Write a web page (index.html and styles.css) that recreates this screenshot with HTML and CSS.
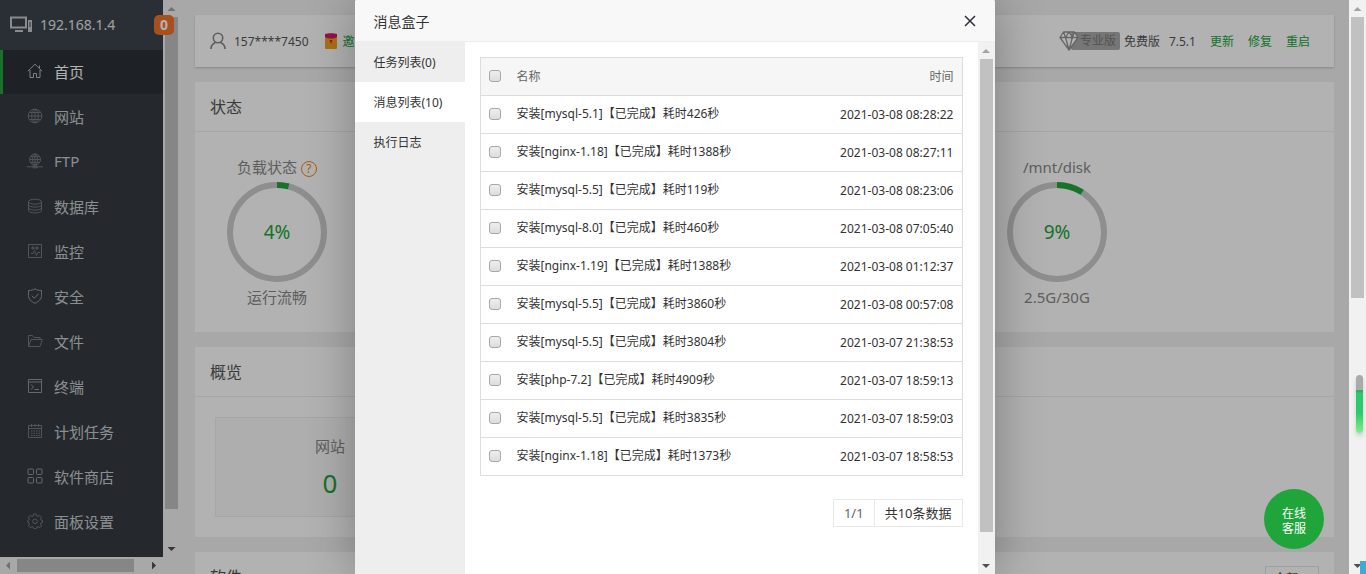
FILE: index.html
```html
<!DOCTYPE html>
<html lang="zh-CN">
<head>
  <meta charset="UTF-8" />
  <meta name="viewport" content="width=device-width, initial-scale=1.0" />
  <title>首页</title>
  <link rel="stylesheet" href="styles.css">
</head>
<body>
  <div class="app">
    <!-- Sidebar -->
    <aside class="sidebar">
      <nav class="menu">
        <div class="host">
          <svg class="host-icon" viewBox="0 0 23 16" width="23" height="16" fill="none" stroke="#c4c8cc" stroke-width="2"><path d="M1 1.5h15v10H1zM5 15h8"/><path d="M18 4h4v12h-4z" fill="#c4c8cc" stroke="none"/><path d="M20 6v5" stroke="#3c444d" stroke-width="1"/></svg>
          <span>192.168.1.4</span>
        </div>
        <ul>
          <li><a class="menu-item active" href="#"><svg viewBox="0 0 16 16"><path d="M.8 8.3 8 1.2l7.2 7.1M3 7v7.5h3.5v-4h3v4H13V7M12.5 5V2.5"/></svg>首页</a></li>
          <li><a class="menu-item" href="#"><svg viewBox="0 0 16 16"><circle cx="8" cy="8" r="6.8"/><ellipse cx="8" cy="8" rx="3.3" ry="6.8"/><path d="M8 1v14M1 8h14M2.3 4.5h11.4M2.3 11.5h11.4"/></svg>网站</a></li>
          <li><a class="menu-item" href="#"><svg viewBox="0 0 16 16"><circle cx="8" cy="6.5" r="5.5"/><ellipse cx="8" cy="6.5" rx="2.6" ry="5.5"/><path d="M8 1v11M2.5 6.5h11M3.4 3.7h9.2M3.4 9.3h9.2M0 13.8h16M6 12.8h4v2H6z"/></svg>FTP</a></li>
          <li><a class="menu-item" href="#"><svg viewBox="0 0 16 16"><ellipse cx="8" cy="3.7" rx="6.5" ry="2.5"/><path d="M1.5 3.7v8.8c0 3.2 13 3.2 13 0V3.7M1.5 6.7c0 3.2 13 3.2 13 0M1.5 9.7c0 3.2 13 3.2 13 0"/></svg>数据库</a></li>
          <li><a class="menu-item" href="#"><svg viewBox="0 0 16 16"><path d="M1.5 1.5h13v13h-13zM4 10.5h2l1.5-3 2 5 1.3-3H13M5 4h2v2H5zM9 4h2v2H9z"/></svg>监控</a></li>
          <li><a class="menu-item bright" href="#"><svg viewBox="0 0 16 16"><path d="M8 .8c2 1.4 4.2 1.7 6.5 1.7v5c0 3.5-2.5 6-6.5 7.8C4 13.500 1.500 11 1.500 7.500v-5C3.800 2.500 6 2.200 8 .8zM4.700 7.700l2.600 2.600 4.200-4.600"/></svg>安全</a></li>
          <li><a class="menu-item" href="#"><svg viewBox="0 0 16 16"><path d="M1.500 13.500V2.500h4l1.500 2h6v2M1.500 13.500l2.500-7h11.300l-2.300 7z"/></svg>文件</a></li>
          <li><a class="menu-item bright" href="#"><svg viewBox="0 0 16 16"><path d="M1.500 1.500h13v13h-13zM1.500 4h13M4 6.500 6.500 9 4 11.500M7.500 11.500H12"/></svg>终端</a></li>
          <li><a class="menu-item" href="#"><svg viewBox="0 0 16 16"><path d="M1.500 2.500h13v12h-13zM1.500 5.500h13M4.500 1v3M8 1v3M11.500 1v3"/><path d="M4 8h9M4 10.300h9M4 12.500h9" stroke-dasharray="1.500 1"/></svg>计划任务</a></li>
          <li><a class="menu-item bright" href="#"><svg viewBox="0 0 16 16"><rect x="1" y="1" width="5.500" height="5.500" rx="1"/><rect x="9.500" y="1" width="5.500" height="5.500" rx="1"/><rect x="1" y="9.500" width="5.500" height="5.500" rx="1"/><rect x="9.500" y="9.500" width="5.500" height="5.500" rx="1"/></svg>软件商店</a></li>
          <li><a class="menu-item" href="#"><svg viewBox="0 0 16 16"><path d="M6.700 1h2.600l.5 2 1.200.5 1.800-1 1.800 1.800-1 1.800.4 1 1.500.5v1.800l-1.500.5-.4 1.200 1 1.800-1.800 1.800-1.800-1-1.200.5-.5 1.500H6.700l-.5-1.500L5 13.700l-1.800 1-1.800-1.800 1-1.800L2 9.900.800 9.400V7.600L2 7.100l.4-1-1-1.800 1.800-1.800 1.800 1 1.200-.5z"/><circle cx="8" cy="8.300" r="2.300"/></svg>面板设置</a></li>
        </ul>
      </nav>
      <div class="scrollbar"><i class="arrow up"></i><div class="track"><b class="thumb side-thumb"></b></div><i class="arrow down"></i></div>
      <div class="scrollbar horizontal"><i class="arrow left"></i><div class="track"><b class="thumb"></b></div><i class="arrow right"></i></div>
      <button class="badge" type="button">0</button>
    </aside>

    <!-- Main content -->
    <main class="content">
      <section class="card topbar">
        <svg width="16" height="18" viewBox="0 0 16 18" fill="none" stroke="#888" stroke-width="1.600"><circle cx="8" cy="6" r="4.700"/><path d="M1 17c0-3.500 2-5.500 4.500-6.500M15 17c0-3.500-2-5.500-4.500-6.500"/></svg>
        <span>157****7450</span>
        <a class="invite" href="#"><svg width="12" height="16" viewBox="0 0 12 16"><rect y="1" width="12" height="15" rx="1" fill="#f5a31a"/><path d="M0 1c3-1 9-1 12 0v3C9 6 3 6 0 4z" fill="#d6186c"/><path d="M4.500 7h3L6 11z" fill="#d42a20"/></svg>邀请</a>
        <div class="version">
          <span class="pro"><svg width="20" height="20" viewBox="0 0 20 20" fill="#b8b8b8" stroke="#666" stroke-width="1.300" stroke-linejoin="round"><path d="M4.500 1h11L19 6.500 10 19 1 6.500zM1 6.500h18M4.500 1 6.500 6.500 10 19l3.500-12.500 2-5.500M6.500 6.500 10 1l3.500 5.500"/></svg><em>专业版</em></span>
          <span>免费版</span>
          <span class="number">7.5.1</span>
          <a href="#">更新</a>
          <a href="#">修复</a>
          <a href="#">重启</a>
        </div>
      </section>

      <section class="card">
        <h2>状态</h2>
        <div class="gauges">
          <div class="gauge">
            <h3>负载状态 <span class="help">?</span></h3>
            <div class="ring"><svg viewBox="0 0 100 100"><circle cx="50" cy="50" r="47"/><circle class="value" cx="50" cy="50" r="47" pathLength="100" stroke-dasharray="4 96"/></svg><span>4%</span></div>
            <p>运行流畅</p>
          </div>
          <div class="gauge">
            <h3>/mnt/disk</h3>
            <div class="ring"><svg viewBox="0 0 100 100"><circle cx="50" cy="50" r="47"/><circle class="value" cx="50" cy="50" r="47" pathLength="100" stroke-dasharray="9 91"/></svg><span>9%</span></div>
            <p>2.5G/30G</p>
          </div>
        </div>
      </section>

      <section class="card">
        <h2>概览</h2>
        <div class="overview">
          <div class="stat"><p>网站</p><a href="#">0</a></div>
        </div>
      </section>

      <section class="card software">
        <h2>软件</h2>
        <select aria-label="软件"><option>全部</option></select>
      </section>
    </main>

    <div class="shade"></div>

    <!-- Message box -->
    <div class="dialog" role="dialog" aria-labelledby="dialogTitle">
      <header class="dialog-head">
        <h1 id="dialogTitle">消息盒子</h1>
        <button class="close" type="button" aria-label="关闭"><svg width="12" height="12" viewBox="0 0 12 12" stroke="#2e2d3c" stroke-width="1.500"><path d="M1 1l10 10M11 1 1 11"/></svg></button>
      </header>
      <div class="dialog-body">
        <div class="tabs">
          <button type="button">任务列表(0)</button>
          <button type="button" class="on">消息列表(10)</button>
          <button type="button">执行日志</button>
        </div>
        <div class="messages">
          <table>
            <thead>
              <tr><th class="check"><input type="checkbox" aria-label="全选"></th><th>名称</th><th class="time">时间</th></tr>
            </thead>
            <tbody>
              <tr><td><input type="checkbox" id="m1"></td><td><label for="m1">安装[mysql-5.1]【已完成】耗时426秒</label></td><td class="time">2021-03-08 08:28:22</td></tr>
              <tr><td><input type="checkbox" id="m2"></td><td><label for="m2">安装[nginx-1.18]【已完成】耗时1388秒</label></td><td class="time">2021-03-08 08:27:11</td></tr>
              <tr><td><input type="checkbox" id="m3"></td><td><label for="m3">安装[mysql-5.5]【已完成】耗时119秒</label></td><td class="time">2021-03-08 08:23:06</td></tr>
              <tr><td><input type="checkbox" id="m4"></td><td><label for="m4">安装[mysql-8.0]【已完成】耗时460秒</label></td><td class="time">2021-03-08 07:05:40</td></tr>
              <tr><td><input type="checkbox" id="m5"></td><td><label for="m5">安装[nginx-1.19]【已完成】耗时1388秒</label></td><td class="time">2021-03-08 01:12:37</td></tr>
              <tr><td><input type="checkbox" id="m6"></td><td><label for="m6">安装[mysql-5.5]【已完成】耗时3860秒</label></td><td class="time">2021-03-08 00:57:08</td></tr>
              <tr><td><input type="checkbox" id="m7"></td><td><label for="m7">安装[mysql-5.5]【已完成】耗时3804秒</label></td><td class="time">2021-03-07 21:38:53</td></tr>
              <tr><td><input type="checkbox" id="m8"></td><td><label for="m8">安装[php-7.2]【已完成】耗时4909秒</label></td><td class="time">2021-03-07 18:59:13</td></tr>
              <tr><td><input type="checkbox" id="m9"></td><td><label for="m9">安装[mysql-5.5]【已完成】耗时3835秒</label></td><td class="time">2021-03-07 18:59:03</td></tr>
              <tr><td><input type="checkbox" id="m10"></td><td><label for="m10">安装[nginx-1.18]【已完成】耗时1373秒</label></td><td class="time">2021-03-07 18:58:53</td></tr>
            </tbody>
          </table>
          <div class="pager"><span>1/1</span><span class="total">共10条数据</span></div>
        </div>
        <div class="scrollbar"><i class="arrow up"></i><div class="track"><b class="thumb dialog-thumb"></b></div><i class="arrow down"></i></div>
      </div>
    </div>

    <button class="service" type="button">在线<br>客服</button>
  </div>

  <div class="scrollbar page-scroll"><i class="arrow up"></i><div class="track"><b class="thumb page-thumb"></b></div><i class="arrow down"></i></div>
  <div class="meter"></div>
  <div class="corner"></div>
</body>
</html>
```
FILE: styles.css
```css
* {
  margin: 0;
  padding: 0;
  box-sizing: border-box;
}

body {
  display: flex;
  height: 100vh;
  overflow: hidden;
  position: relative;
  background: #f1f1f1;
  color: #555;
  font-family: "Noto Sans", "Noto Sans CJK SC", sans-serif;
  font-size: 12px;
}

button, input, select {
  font-family: inherit;
  font-size: inherit;
}

a {
  color: #20a53a;
  text-decoration: none;
}

ul {
  list-style: none;
}

.app {
  display: flex;
  flex: 1;
  min-width: 0;
  height: 100%;
  position: relative;
  overflow: hidden;
}

/* sidebar */
.sidebar {
  display: grid;
  grid-template-columns: 163px 17px;
  grid-template-rows: 1fr 17px;
  flex: none;
  height: 100%;
  position: relative;
}

.menu {
  background: #353c42;
  overflow: hidden;
}

.host {
  display: flex;
  align-items: center;
  gap: 7px;
  height: 50px;
  padding: 0 0 2px 10px;
  background: #3c444d;
  color: #e4e6e8;
  font-size: 14px;
}

.menu-item {
  display: flex;
  align-items: center;
  gap: 11px;
  height: 44px;
  margin-bottom: 1px;
  padding: 0 0 2px 24px;
  border-left: 3px solid transparent;
  color: #c8cccf;
  font-size: 15px;
}

.menu-item svg {
  width: 16px;
  height: 16px;
  fill: none;
  stroke: #747a7f;
  stroke-width: 1;
}

.menu-item.bright svg {
  stroke: #92979b;
}

.menu-item.active {
  background: #2b3036;
  border-left-color: #20a53a;
  color: #fff;
}

.menu-item.active svg {
  stroke: #b5b8ba;
}

.badge {
  position: absolute;
  top: 15px;
  right: 6px;
  width: 20px;
  height: 20px;
  border: 0;
  border-radius: 5px;
  background: #f3702a;
  color: #fff;
  font-size: 14px;
  font-weight: bold;
  line-height: 20px;
}

/* scrollbars */
.scrollbar {
  display: flex;
  flex-direction: column;
  flex: none;
  width: 17px;
  padding: 0 2px;
  background: #f1f1f1;
}

.scrollbar.horizontal {
  flex-direction: row;
  width: auto;
  height: 17px;
  padding: 2px 0;
}

.track {
  flex: 1;
}

.arrow {
  flex: none;
  align-self: center;
  width: 8px;
  height: 4px;
  margin: 7px 3px 6px;
  background: #505050;
  clip-path: polygon(0 0, 100% 0, 50% 100%);
}

.arrow.up {
  background: #a3a3a3;
  clip-path: polygon(0 100%, 100% 100%, 50% 0);
}

.arrow.left, .arrow.right {
  width: 4px;
  height: 8px;
  margin: 3px 7px 3px 6px;
  clip-path: polygon(0 0, 100% 50%, 0 100%);
}

.arrow.left {
  background: #a3a3a3;
  clip-path: polygon(100% 0, 0 50%, 100% 100%);
}

.thumb {
  display: block;
  width: 100%;
  height: 100%;
  background: #c1c1c1;
}

.horizontal .thumb {
  width: 91%;
}

.side-thumb {
  height: 94%;
}

.page-thumb {
  height: 52%;
}

.dialog-thumb {
  height: 95%;
}

/* content */
.content {
  flex: 1;
  min-width: 0;
  padding: 15px;
  overflow: hidden;
}

.card {
  margin-bottom: 15px;
  background: #fff;
}

.card h2 {
  height: 50px;
  padding-left: 15px;
  border-bottom: 1px solid #eee;
  font-size: 16px;
  font-weight: normal;
  line-height: 50px;
}

.topbar {
  display: flex;
  align-items: center;
  gap: 8px;
  height: 52px;
  padding: 0 24px 0 15px;
  box-shadow: 0 1px 2px rgba(0, 0, 0, 0.2);
}

.invite {
  display: flex;
  align-items: center;
  gap: 6px;
  margin-left: 8px;
}

.version {
  display: flex;
  align-items: center;
  gap: 14px;
  margin-left: auto;
}

.pro {
  display: flex;
  align-items: center;
  margin-right: -10px;
}

.pro svg {
  z-index: 1;
}

.pro em {
  height: 18px;
  margin-left: -8px;
  padding: 0 4px 0 9px;
  border-radius: 2px;
  background: #aaa;
  color: #777;
  font-style: normal;
  line-height: 18px;
}

.number {
  margin-left: -5px;
}

.gauges {
  display: flex;
  height: 200px;
  padding: 24px 199px 0 4px;
  justify-content: space-between;
  color: #888;
  text-align: center;
}

.gauge {
  width: 156px;
}

.gauge h3, .gauge p {
  height: 22px;
  font-size: 15px;
  font-weight: normal;
  line-height: 22px;
}

.help {
  display: inline-block;
  width: 16px;
  height: 16px;
  border: 1px solid #f0861d;
  border-radius: 50%;
  color: #f0861d;
  font-size: 12px;
  line-height: 14px;
}

.ring {
  display: grid;
  place-items: center;
  width: 100px;
  height: 100px;
  margin: 4px auto;
  color: #20a53a;
  font-size: 19px;
}

.ring svg, .ring span {
  grid-area: 1 / 1;
}

.ring svg {
  width: 100px;
  height: 100px;
  fill: none;
  stroke: #ccc;
  stroke-width: 6;
  transform: rotate(-90deg);
}

.ring .value {
  stroke: #20a53a;
}

.overview {
  height: 140px;
  padding: 20px;
}

.stat {
  width: 230px;
  height: 100px;
  padding-top: 17px;
  border: 1px solid #eee;
  background: #f9f9f9;
  color: #888;
  font-size: 15px;
  line-height: 22px;
  text-align: center;
}

.stat a {
  display: block;
  margin-top: 8px;
  font-size: 26px;
  line-height: 36px;
}

.software {
  display: flex;
  justify-content: space-between;
  padding-right: 15px;
}

.software h2 {
  flex: 1;
}

.software select {
  width: 54px;
  height: 24px;
  margin-top: 14px;
  padding-left: 8px;
  border: 1px solid #e4e4e4;
  background: #fff;
  color: #555;
  appearance: none;
}

/* message box */
.shade {
  position: absolute;
  inset: 0;
  background: rgba(0, 0, 0, 0.3);
}

.dialog {
  display: flex;
  flex-direction: column;
  position: absolute;
  top: 0;
  left: 50%;
  width: 640px;
  height: 100%;
  margin-left: -320px;
  border-radius: 2px;
  background: #fff;
  box-shadow: 1px 1px 50px rgba(0, 0, 0, 0.3);
  color: #333;
}

.dialog-head {
  display: flex;
  align-items: center;
  justify-content: space-between;
  height: 42px;
  padding: 0 19px;
  border-bottom: 1px solid #eee;
  border-radius: 2px 2px 0 0;
  background: #f8f8f8;
}

.dialog-head h1 {
  font-size: 14px;
  font-weight: normal;
}

.close {
  display: flex;
  border: 0;
  background: none;
}

.dialog-body {
  display: flex;
  flex: 1;
  min-height: 0;
}

.tabs {
  flex: none;
  width: 110px;
  background: #eee;
}

.tabs button {
  display: block;
  width: 100%;
  height: 40px;
  padding-left: 19px;
  border: 0;
  background: none;
  color: #333;
  text-align: left;
}

.tabs .on {
  background: #fff;
}

.messages {
  flex: 1;
  padding: 15px;
  overflow: hidden;
}

.messages table {
  width: 100%;
  border: 1px solid #ddd;
  border-collapse: collapse;
}

.messages tr {
  height: 38px;
  border-bottom: 1px solid #ddd;
}

.messages th {
  background: #f6f6f6;
  color: #666;
  font-weight: normal;
  text-align: left;
}

.messages th, .messages td {
  padding: 0 8px 1px;
}

.messages label {
  display: block;
  padding-bottom: 2px;
}

.messages .check {
  width: 28px;
}

.messages .time {
  text-align: right;
}

.messages input {
  display: block;
  width: 12px;
  height: 12px;
  border: 1px solid #a8a8a8;
  border-radius: 3px;
  background: linear-gradient(#eee, #ddd);
  appearance: none;
}

.pager {
  display: flex;
  justify-content: flex-end;
  margin-top: 23px;
  color: #666;
  font-size: 13px;
  line-height: 26px;
}

.pager span {
  padding: 0 10px;
  border: 1px solid #e8e8e8;
}

.pager .total {
  border-left: 0;
  color: #333;
}

/* floating pieces */
.service {
  position: absolute;
  right: 25px;
  bottom: 25px;
  width: 60px;
  height: 60px;
  padding-top: 4px;
  border: 0;
  border-radius: 50%;
  background: #20a53a;
  color: #fff;
  line-height: 15px;
}

.meter {
  position: absolute;
  top: 375px;
  right: 3px;
  width: 7px;
  height: 58px;
  border-radius: 4px;
  background: linear-gradient(#aaa 0 15px, #22b564 15px 17px, #2acb6c 18px 38px, #7df08a);
  box-shadow: 0 3px 4px rgba(0, 0, 0, 0.15);
}

.corner {
  position: absolute;
  right: 0;
  bottom: 0;
  width: 6px;
  height: 13px;
  background: #3bacd6;
}
```
